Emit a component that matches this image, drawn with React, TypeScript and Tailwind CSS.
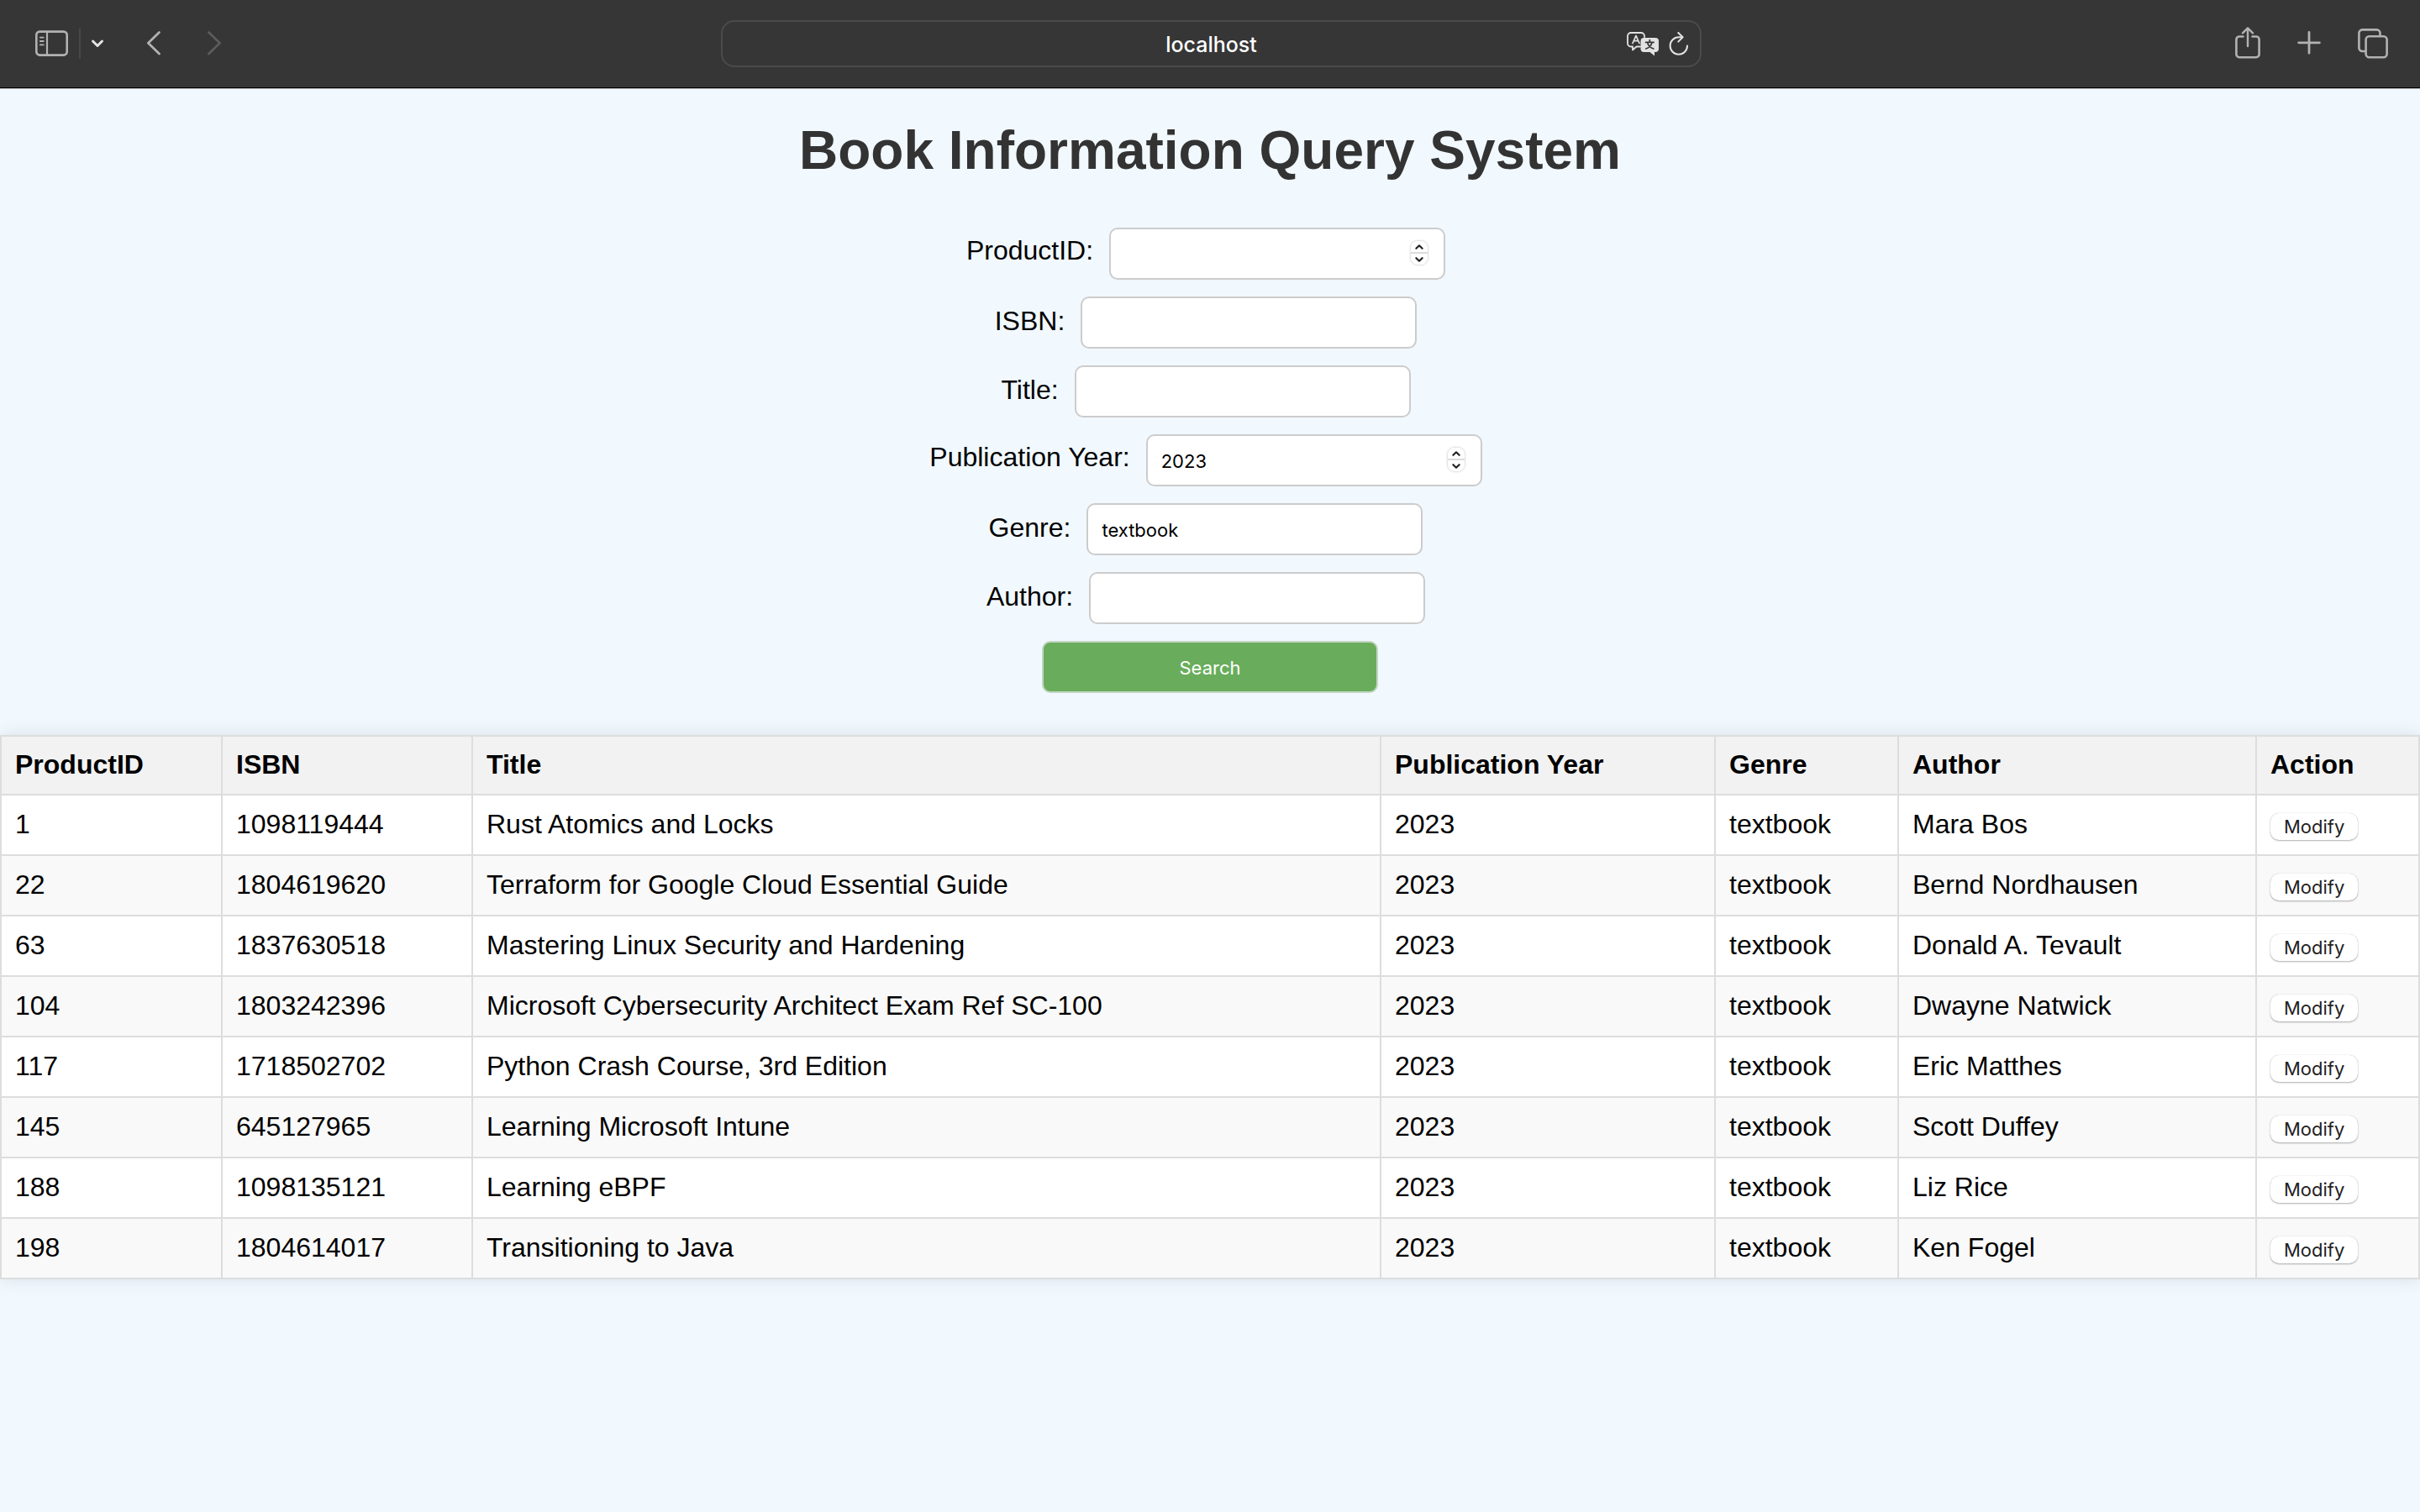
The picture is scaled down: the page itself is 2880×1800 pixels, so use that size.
import { useState } from "react";

type Field = { id: string; label: string; value: string; numeric?: boolean };
type Book = { id: number; isbn: string; title: string; year: number; genre: string; author: string };

const FIELDS: Field[] = [
  { id: "product-id", label: "ProductID:", value: "", numeric: true },
  { id: "isbn", label: "ISBN:", value: "" },
  { id: "title", label: "Title:", value: "" },
  { id: "year", label: "Publication Year:", value: "2023", numeric: true },
  { id: "genre", label: "Genre:", value: "textbook" },
  { id: "author", label: "Author:", value: "" },
];

const BOOKS: Book[] = [
  { id: 1, isbn: "1098119444", title: "Rust Atomics and Locks", year: 2023, genre: "textbook", author: "Mara Bos" },
  { id: 22, isbn: "1804619620", title: "Terraform for Google Cloud Essential Guide", year: 2023, genre: "textbook", author: "Bernd Nordhausen" },
  { id: 63, isbn: "1837630518", title: "Mastering Linux Security and Hardening", year: 2023, genre: "textbook", author: "Donald A. Tevault" },
  { id: 104, isbn: "1803242396", title: "Microsoft Cybersecurity Architect Exam Ref SC-100", year: 2023, genre: "textbook", author: "Dwayne Natwick" },
  { id: 117, isbn: "1718502702", title: "Python Crash Course, 3rd Edition", year: 2023, genre: "textbook", author: "Eric Matthes" },
  { id: 145, isbn: "645127965", title: "Learning Microsoft Intune", year: 2023, genre: "textbook", author: "Scott Duffey" },
  { id: 188, isbn: "1098135121", title: "Learning eBPF", year: 2023, genre: "textbook", author: "Liz Rice" },
  { id: 198, isbn: "1804614017", title: "Transitioning to Java", year: 2023, genre: "textbook", author: "Ken Fogel" },
];

const COLUMNS = [
  { name: "ProductID", width: "w-[263px]" },
  { name: "ISBN", width: "w-[298px]" },
  { name: "Title", width: "w-auto" },
  { name: "Publication Year", width: "w-[398px]" },
  { name: "Genre", width: "w-[218px]" },
  { name: "Author", width: "w-[426px]" },
  { name: "Action", width: "w-[194px]" },
];

const stroke = { fill: "none", stroke: "currentColor", strokeLinecap: "round", strokeLinejoin: "round" } as const;

function SidebarIcon() {
  return (
    <svg width="40" height="32" viewBox="0 0 40 32" {...stroke} strokeWidth="2.6">
      <rect x="2.3" y="1.6" width="36.4" height="28" rx="4" />
      <path d="M15 2v28" strokeWidth="2.2" />
      <path d="M6.8 8.6h4M6.8 13h4M6.8 17.4h4" strokeWidth="1.8" />
    </svg>
  );
}

function TranslateIcon() {
  return (
    <svg width="38" height="30" viewBox="0 0 38 30" {...stroke}>
      <path
        d="M16 17.5H11.5L7 21.5V17.5H5A4 4 0 0 1 1 13.5V5A4 4 0 0 1 5 1H17A4 4 0 0 1 21 5V6"
        strokeWidth="1.8"
      />
      <path d="M7 13.5L11 4.5L15 13.5M8.4 10.6H13.6" strokeWidth="1.8" />
      <path
        d="M20.5 7H34A4 4 0 0 1 38 11V20A4 4 0 0 1 34 24H33V28.6L27.5 24H20.5A4 4 0 0 1 16.5 20V11A4 4 0 0 1 20.5 7Z"
        fill="currentColor"
        stroke="none"
      />
      <path d="M27.3 9.6V12M22.6 12.4H32M30 12.6C29 16.5 26 19 22.8 20M24.6 12.6C25.6 16.5 28.6 19 31.8 20" stroke="#363636" strokeWidth="1.8" />
    </svg>
  );
}

function ReloadIcon() {
  return (
    <svg width="24" height="30" viewBox="0 0 24 30" {...stroke} strokeWidth="2">
      <path d="M22 16.5A10.2 10.2 0 1 1 11.8 6.3H15.5" />
      <path d="M11.3 1L16.6 6.3L11.3 11.6" />
    </svg>
  );
}

function Stepper({ label, onStep }: { label: string; onStep: (delta: number) => void }) {
  return (
    <span className="absolute top-4 right-[21px] flex h-7 w-5 flex-col overflow-hidden rounded-lg bg-white text-[#222] shadow-[0_0_2px_1px_rgba(0,0,0,0.14)]">
      <button type="button" aria-label={`Increase ${label}`} onClick={() => onStep(1)} className="flex flex-1 items-center justify-center border-b-2 border-[#dcdcdc]">
        <svg width="10" height="6" viewBox="0 0 10 6" {...stroke} strokeWidth="2.2">
          <path d="M1.4 4.8L5 1.3L8.6 4.8" />
        </svg>
      </button>
      <button type="button" aria-label={`Decrease ${label}`} onClick={() => onStep(-1)} className="flex flex-1 items-center justify-center">
        <svg width="10" height="6" viewBox="0 0 10 6" {...stroke} strokeWidth="2.2">
          <path d="M1.4 1.2L5 4.7L8.6 1.2" />
        </svg>
      </button>
    </span>
  );
}

function FormRow({ field }: { field: Field }) {
  const [value, setValue] = useState(field.value);
  return (
    <div className="flex items-center justify-center">
      <label htmlFor={field.id} className={field.numeric ? "pb-2" : "pb-1"}>
        {field.label}
      </label>
      <span className="relative mr-2.5 ml-[19px]">
        <input
          id={field.id}
          type={field.numeric ? "number" : "text"}
          value={value}
          onChange={(e) => setValue(e.target.value)}
          className="block h-[62px] w-[400px] appearance-none rounded-[10px] border-2 border-[#ccc] bg-white px-4 pt-0.5 font-[Inter,sans-serif] text-[22px] text-black [-moz-appearance:textfield] [&::-webkit-inner-spin-button]:appearance-none"
        />
        {field.numeric && <Stepper label={field.label} onStep={(d) => setValue(String(Number(value) + d))} />}
      </span>
    </div>
  );
}

function Toolbar() {
  return (
    <header className="flex h-[106px] items-center border-b border-[#b4b4b4] bg-[#363636] pb-0.5 text-[#b2b2b2] shadow-[inset_0_-1px_0_#000]">
      <div className="flex flex-1 items-center pl-[41px]">
        <button type="button" aria-label="Show sidebar">
          <SidebarIcon />
        </button>
        <span className="ml-[13px] h-9 w-0.5 bg-[#484848]" />
        <button type="button" aria-label="Tab groups" className="ml-3 text-[#e4e4e4]">
          <svg width="16" height="12" viewBox="0 0 16 12" {...stroke} strokeWidth="3">
            <path d="M2.5 3L8 8.5L13.5 3" />
          </svg>
        </button>
        <button type="button" aria-label="Back" className="ml-[50px]">
          <svg width="18" height="30" viewBox="0 0 18 30" {...stroke} strokeWidth="2.8">
            <path d="M15.5 1.6L2.4 14.3L15.5 27" />
          </svg>
        </button>
        <button type="button" aria-label="Forward" className="ml-[54px] text-[#5c5c5c]">
          <svg width="18" height="30" viewBox="0 0 18 30" {...stroke} strokeWidth="2.8">
            <path d="M2.5 1.6L15.6 14.3L2.5 27" />
          </svg>
        </button>
      </div>
      <div className="relative flex h-14 w-[40.5%] items-center justify-center rounded-2xl border-2 border-[#4b4b4b] pt-0.5 font-[Inter,sans-serif] text-[25px] font-medium text-white">
        localhost
        <div className="absolute right-[13px] flex items-center gap-3 text-[#e2e2e2]">
          <button type="button" aria-label="Translate page">
            <TranslateIcon />
          </button>
          <button type="button" aria-label="Reload page">
            <ReloadIcon />
          </button>
        </div>
      </div>
      <div className="flex flex-1 items-center justify-end pr-[38px]">
        <button type="button" aria-label="Share">
          <svg width="30" height="40" viewBox="0 0 30 40" {...stroke} strokeWidth="2.6">
            <path d="M9.5 11.5H5A3.6 3.6 0 0 0 1.4 15V32.6A3.6 3.6 0 0 0 5 36.2H25A3.6 3.6 0 0 0 28.6 32.6V15A3.6 3.6 0 0 0 25 11.5H20.5" />
            <path d="M15 23V1.7M9 7.4L15 1.4L21 7.4" strokeWidth="2.4" />
          </svg>
        </button>
        <button type="button" aria-label="New tab" className="ml-11">
          <svg width="28" height="30" viewBox="0 0 28 30" {...stroke} strokeWidth="2.8">
            <path d="M14 1.4V26.2M1.6 13.8H26.4" />
          </svg>
        </button>
        <button type="button" aria-label="Tab overview" className="ml-11">
          <svg width="36" height="36" viewBox="0 0 36 36" {...stroke} strokeWidth="2.6">
            <path d="M8.5 27H5.4A4 4 0 0 1 1.4 23V5.4A4 4 0 0 1 5.4 1.4H22.5A4 4 0 0 1 26.5 5.4V8.5" />
            <rect x="9.6" y="9.2" width="25" height="25" rx="4" />
          </svg>
        </button>
      </div>
    </header>
  );
}

export default function App() {
  return (
    <div className="min-h-screen bg-[#f1f8fe] font-['Liberation_Sans',Arial,sans-serif] text-[32px] leading-9 text-black">
      <Toolbar />
      <main>
        <h1 className="pt-9 text-center text-[64px] leading-[74px] font-bold text-[#333]">Book Information Query System</h1>
        <form className="mt-[55px] flex flex-col gap-5" onSubmit={(e) => e.preventDefault()}>
          {FIELDS.map((field) => (
            <FormRow key={field.id} field={field} />
          ))}
          <button
            type="submit"
            className="h-[62px] w-[400px] self-center rounded-[10px] border-2 border-[#c3d6c3] bg-[#69ad5c] pt-0.5 font-[Inter,sans-serif] text-[22px] text-white"
          >
            Search
          </button>
        </form>
        <table className="mt-[50px] w-full table-fixed border-collapse bg-white text-left shadow-[0_0_20px_rgba(0,0,0,0.1)]">
          <colgroup>
            {COLUMNS.map((c) => (
              <col key={c.name} className={c.width} />
            ))}
          </colgroup>
          <thead>
            <tr className="bg-[#f2f2f2]">
              {COLUMNS.map((c) => (
                <th key={c.name} scope="col" className="border-2 border-[#ddd] px-4 pt-[15px] pb-[17px] font-bold">
                  {c.name}
                </th>
              ))}
            </tr>
          </thead>
          <tbody>
            {BOOKS.map((b) => (
              <tr key={b.id} className="h-[72px] even:bg-[#f9f9f9]">
                {[b.id, b.isbn, b.title, b.year, b.genre, b.author].map((cell, i) => (
                  <td key={i} className="border-2 border-[#ddd] px-4 pt-[15px] pb-[17px]">
                    {cell}
                  </td>
                ))}
                <td className="border-2 border-[#ddd] px-4">
                  <button
                    type="button"
                    className="mt-1 block rounded-[10px] bg-white px-4 font-[Inter,sans-serif] text-[22px] leading-8 text-[#222] shadow-[0_1px_2px_rgba(0,0,0,0.3),0_0_1px_rgba(0,0,0,0.25)]"
                  >
                    Modify
                  </button>
                </td>
              </tr>
            ))}
          </tbody>
        </table>
      </main>
    </div>
  );
}
